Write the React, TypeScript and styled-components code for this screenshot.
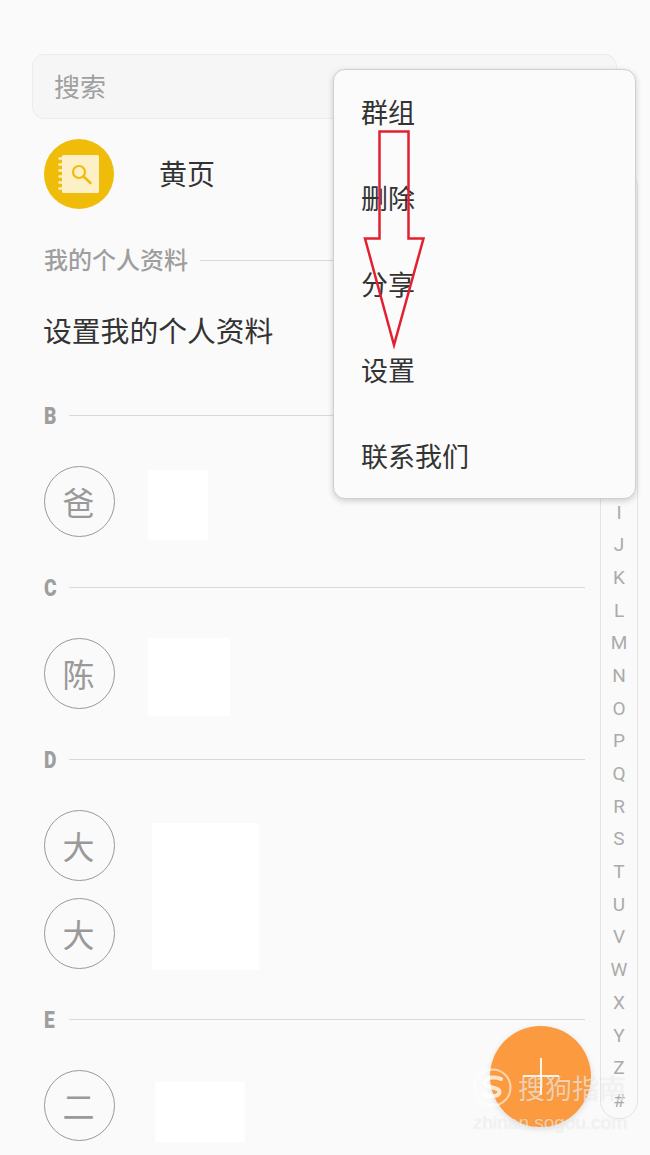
import React from "react";
import styled, { createGlobalStyle } from "styled-components";

const GlobalStyle = createGlobalStyle`
  html, body {
    margin: 0;
    padding: 0;
    background: #fafafa;
  }
`;

const cjk = `"Noto Sans CJK SC", "Noto Sans", sans-serif`;

const Page = styled.div`
  position: relative;
  width: 650px;
  height: 1155px;
  overflow: hidden;
  background: #fafafa;
  font-family: ${cjk};
`;

const SearchBar = styled.div`
  display: flex;
  align-items: center;
  box-sizing: border-box;
  height: 65px;
  margin: 54px 33px 0 32px;
  padding: 0 0 2px 21px;
  background: #f6f6f6;
  border: 1px solid #ececec;
  border-radius: 12px;
  font-size: 26px;
  color: #a0a0a0;
`;

const Body = styled.div`
  display: flex;
  align-items: flex-start;
`;

const List = styled.div`
  box-sizing: border-box;
  width: 585px;
  flex: none;
  padding-left: 44px;
`;

const YellowPages = styled.div`
  display: flex;
  align-items: center;
  gap: 45px;
  height: 70px;
  margin-top: 20px;
  font-size: 28px;
  color: #333;
  span {
    padding-bottom: 2px;
  }
`;

const SectionHeader = styled.div`
  display: flex;
  align-items: center;
  gap: 12px;
  height: 30px;
  margin: 35px 0 36px;
  &::after {
    content: "";
    flex: 1;
    height: 1px;
    background: #d9d9d9;
  }
`;

const ProfileHeader = styled(SectionHeader)`
  margin: 36px 0 35px;
`;

const ProfileTitle = styled.span`
  padding-bottom: 3px;
  font-size: 24px;
  font-weight: 500;
  color: #9e9e9e;
`;

const Letter = styled.span`
  display: block;
  width: 13px;
  padding-top: 3px;
  font-family: Roboto, sans-serif;
  font-size: 24px;
  line-height: 27px;
  font-weight: 900;
  color: #9e9e9e;
  transform: scaleX(0.8);
  transform-origin: left center;
`;

const SetProfile = styled.div`
  height: 40px;
  line-height: 40px;
  margin: 0 0 50px -1px;
  font-size: 28.8px;
  color: #333;
`;

const ContactGroup = styled.div`
  display: flex;
  align-items: flex-start;
`;

const AvatarStack = styled.div`
  display: flex;
  flex-direction: column;
  gap: 17px;
`;

const Avatar = styled.div`
  display: flex;
  align-items: center;
  justify-content: center;
  box-sizing: border-box;
  width: 71px;
  height: 71px;
  padding: 0 2px 2px 0;
  border: 1.5px solid #9a9a9a;
  border-radius: 50%;
  font-size: 32px;
  color: #999;
`;

// the block's height does not count towards the row, it is painted over the gap below
const Redaction = styled.div<{ $left: number; $top: number; $w: number; $h: number }>`
  margin-left: ${(p) => p.$left}px;
  margin-top: ${(p) => p.$top}px;
  margin-bottom: -${(p) => p.$h + p.$top}px;
  width: ${(p) => p.$w}px;
  height: ${(p) => p.$h}px;
  background: #fff;
`;

const IndexRail = styled.div`
  box-sizing: border-box;
  flex: none;
  width: 38px;
  margin: 51px 0 0 15px;
  padding-top: 64px;
  display: flex;
  flex-direction: column;
  align-items: center;
  border: 1px solid #e4e4e4;
  border-radius: 18px;
`;

const IndexLetter = styled.span`
  height: 32.7px;
  line-height: 32.7px;
  font-family: Roboto, sans-serif;
  font-weight: 400;
  font-size: 19px;
  color: #ababab;
`;

const Menu = styled.div`
  position: absolute;
  left: 333px;
  top: 69px;
  box-sizing: border-box;
  width: 303px;
  height: 430px;
  background: #fbfbfb;
  border: 1px solid #cfcfcf;
  border-radius: 12px;
  box-shadow: 0 2px 6px rgba(0, 0, 0, 0.18);
`;

const MenuItem = styled.div`
  display: flex;
  align-items: center;
  box-sizing: border-box;
  height: 86px;
  padding: 0 0 4px 27px;
  font-size: 27px;
  color: #333;
`;

const Annotation = styled.svg`
  position: absolute;
  left: 360px;
  top: 125px;
`;

const Fab = styled.div`
  position: absolute;
  left: 490px;
  top: 1026px;
  width: 101px;
  height: 101px;
  border-radius: 50%;
  background: #fb9a3e;
  box-shadow: 0 2px 6px rgba(0, 0, 0, 0.12);
  &::before {
    content: "";
    position: absolute;
    left: 50px;
    top: 32px;
    width: 2px;
    height: 37px;
    background: rgba(255, 255, 255, 0.9);
  }
  &::after {
    content: "";
    position: absolute;
    left: 33px;
    top: 49px;
    width: 36px;
    height: 2px;
    background: rgba(255, 255, 255, 0.9);
  }
`;

const Watermark = styled.div`
  position: absolute;
  left: 473px;
  top: 1066px;
  width: 160px;
  display: flex;
  flex-direction: column;
  color: rgba(255, 255, 255, 0.6);
  text-shadow: 0 0 1px rgba(0, 0, 0, 0.12);
`;

const WatermarkTop = styled.div`
  display: flex;
  align-items: center;
  gap: 6px;
  height: 42px;
  font-size: 27px;
  white-space: nowrap;
`;

const WatermarkUrl = styled.div`
  margin-top: 4px;
  font-family: "Liberation Sans", sans-serif;
  font-size: 19px;
  line-height: 22px;
  white-space: nowrap;
`;

const NotebookIcon = () => (
  <svg width="70" height="70" viewBox="0 0 70 70">
    <circle cx="35" cy="35" r="35" fill="#f0bc0a" />
    <rect x="18" y="16" width="37" height="38" rx="1.5" fill="#fdf0c6" />
    <path
      d="M18 19.5h-2.5M18 25.5h-2.5M18 31.5h-2.5M18 37.5h-2.5M18 43.5h-2.5M18 49.5h-2.5"
      stroke="#fdf0c6"
      strokeWidth="2.4"
      strokeLinecap="round"
    />
    <circle cx="35" cy="33" r="6" fill="none" stroke="#f0bc0a" strokeWidth="2.2" />
    <path d="M39.500 37.500l7 6.500" stroke="#f0bc0a" strokeWidth="2.6" strokeLinecap="round" />
  </svg>
);

const SogouLogo = () => (
  <svg width="39" height="39" viewBox="0 0 39 39" fill="none">
    <circle cx="19.5" cy="19.5" r="18" stroke="rgba(255,255,255,0.6)" strokeWidth="2" />
    <path
      d="M28 11c-5-2.500-15-2.500-16 3.500-1 6 15 4 14.500 9.500-.5 5-10 5-15 2.500"
      stroke="rgba(255,255,255,0.75)"
      strokeWidth="4"
      strokeLinecap="round"
    />
  </svg>
);

const indexLetters = "ABCDEFGHIJKLMNOPQRSTUVWXYZ#".split("");
const menuItems = ["群组", "删除", "分享", "设置", "联系我们"];

export default function App() {
  return (
    <Page>
      <GlobalStyle />
      <SearchBar>搜索</SearchBar>
      <Body>
        <List>
          <YellowPages>
            <NotebookIcon />
            <span>黄页</span>
          </YellowPages>

          <ProfileHeader>
            <ProfileTitle>我的个人资料</ProfileTitle>
          </ProfileHeader>
          <SetProfile>设置我的个人资料</SetProfile>

          <SectionHeader>
            <Letter>B</Letter>
          </SectionHeader>
          <ContactGroup>
            <Avatar>爸</Avatar>
            <Redaction $left={33} $top={4} $w={60} $h={70} />
          </ContactGroup>

          <SectionHeader>
            <Letter>C</Letter>
          </SectionHeader>
          <ContactGroup>
            <Avatar>陈</Avatar>
            <Redaction $left={33} $top={0} $w={82} $h={78} />
          </ContactGroup>

          <SectionHeader>
            <Letter>D</Letter>
          </SectionHeader>
          <ContactGroup>
            <AvatarStack>
              <Avatar>大</Avatar>
              <Avatar>大</Avatar>
            </AvatarStack>
            <Redaction $left={37} $top={13} $w={107} $h={147} />
          </ContactGroup>

          <SectionHeader>
            <Letter>E</Letter>
          </SectionHeader>
          <ContactGroup>
            <Avatar>二</Avatar>
            <Redaction $left={40} $top={12} $w={90} $h={60} />
          </ContactGroup>
        </List>
        <IndexRail>
          {indexLetters.map((l) => (
            <IndexLetter key={l}>{l}</IndexLetter>
          ))}
        </IndexRail>
      </Body>

      <Menu>
        {menuItems.map((m) => (
          <MenuItem key={m}>{m}</MenuItem>
        ))}
      </Menu>

      <Annotation width="70" height="226" viewBox="0 0 70 226" fill="none">
        <path
          d="M19.500 6.500H48.500V113.500H63.500L34 220L5 113.500H19.500Z"
          stroke="#e2202f"
          strokeWidth="2.500"
          strokeLinejoin="miter"
        />
      </Annotation>

      <Fab />
      <Watermark>
        <WatermarkTop>
          <SogouLogo />
          <span>搜狗指南</span>
        </WatermarkTop>
        <WatermarkUrl>zhinan.sogou.com</WatermarkUrl>
      </Watermark>
    </Page>
  );
}
